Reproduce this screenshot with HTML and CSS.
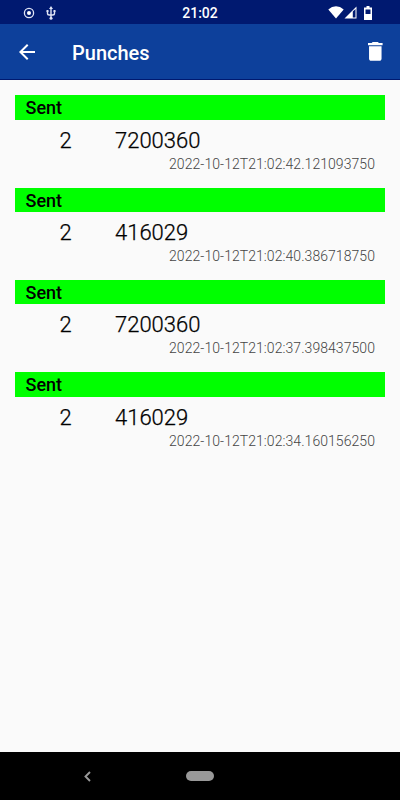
FILE: index.html
```html
<!DOCTYPE html>
<html lang="en">
<head>
    <meta charset="utf-8">
    <title>Punches</title>
    <link rel="stylesheet" href="styles.css">
</head>
<body>
    <div class="status-bar">
        <div class="status-left">
            <svg width="12" height="12" viewBox="0 0 12 12">
                <circle cx="6" cy="6" r="4.6" fill="none" stroke="#dfe4f5" stroke-width="1.3"/>
                <circle cx="6" cy="6" r="2" fill="#fff"/>
            </svg>
            <svg width="10" height="14" viewBox="0 0 10 14" fill="none" stroke="#dfe4f5" stroke-width="1.4">
                <path d="M5 2v10M1.500 5v2.200q0 1.800 1.800 1.800h3.400q1.800 0 1.800-1.800V5"/>
                <path d="M5 0l2 3H3zM.5 4h2v2h-2zM7.500 4h2v2h-2z" fill="#dfe4f5" stroke="none"/>
                <circle cx="5" cy="12.2" r="1.5" fill="#dfe4f5" stroke="none"/>
            </svg>
        </div>
        <span class="clock">21:02</span>
        <div class="status-right">
            <svg width="16" height="13" viewBox="0 0 16 13">
                <path d="M.3 3.400Q3.800.3 8 .3t7.700 3.100L8 12.600z" fill="#fff"/>
            </svg>
            <svg class="signal" width="13" height="13" viewBox="0 0 13 13">
                <path d="M12.500.5v12H.5z" fill="#fff"/>
                <path d="M8.800 5.600L11.500 2.900v8.600H8.800z" fill="#001970"/>
            </svg>
            <svg width="8" height="14" viewBox="0 0 8 14">
                <path d="M2.500 0h3v1.500H8V14H0V1.500h2.500z" fill="#fff"/>
                <path d="M1.500 3.500h5V8h-5z" fill="#001970"/>
            </svg>
        </div>
    </div>

    <header class="toolbar">
        <svg width="16" height="16" viewBox="4 4 16 16">
            <path d="M20 11H7.830l5.590-5.590L12 4l-8 8 8 8 1.410-1.410L7.830 13H20v-2z" fill="#fff"/>
        </svg>
        <h1>Punches</h1>
        <svg width="14.6" height="18.8" viewBox="5 3 14 18">
            <path d="M6 19c0 1.100.9 2 2 2h8c1.100 0 2-.9 2-2V7H6v12zM19 4h-3.500l-1-1h-5l-1 1H5v2h14V4z" fill="#fff"/>
        </svg>
    </header>

    <main class="punches">
        <div class="punch">
            <div class="status">Sent</div>
            <div class="row"><span class="code">2</span><span class="card">7200360</span></div>
            <div class="time">2022-10-12T21:02:42.121093750</div>
        </div>
        <div class="punch">
            <div class="status">Sent</div>
            <div class="row"><span class="code">2</span><span class="card">416029</span></div>
            <div class="time">2022-10-12T21:02:40.386718750</div>
        </div>
        <div class="punch">
            <div class="status">Sent</div>
            <div class="row"><span class="code">2</span><span class="card">7200360</span></div>
            <div class="time">2022-10-12T21:02:37.398437500</div>
        </div>
        <div class="punch">
            <div class="status">Sent</div>
            <div class="row"><span class="code">2</span><span class="card">416029</span></div>
            <div class="time">2022-10-12T21:02:34.160156250</div>
        </div>
    </main>

    <nav class="nav-bar">
        <svg width="7" height="11" viewBox="0 0 7 11">
            <path d="M6 1L1.500 5.500 6 10" fill="none" stroke="#999" stroke-width="1.9"/>
        </svg>
        <div class="home"></div>
    </nav>
</body>
</html>
```
FILE: styles.css
```css
body {
    margin: 0;
    height: 800px;
    display: flex;
    flex-direction: column;
    font-family: Roboto, sans-serif;
    background-color: #fafafa;
    color: #000;
}

svg {
    display: block;
    flex: none;
}

/* System bar */
.status-bar {
    height: 24px;
    box-sizing: border-box;
    padding: 0 28px 0 23px;
    display: grid;
    grid-template-columns: 1fr auto 1fr;
    align-items: center;
    background-color: #001970;
    color: #fff;
}

.status-left {
    display: flex;
    align-items: center;
    gap: 11px;
}

.clock {
    font-size: 14px;
    font-weight: 500;
    line-height: 24px;
    padding-top: 1px;
    margin-left: 5px;
}

.status-right {
    display: flex;
    align-items: center;
    justify-content: flex-end;
}

.signal {
    margin-right: 7px;
}

.toolbar {
    height: 56px;
    box-sizing: border-box;
    padding: 0 17px 0 19px;
    display: flex;
    align-items: center;
    background-color: #0d409b;
    border-bottom: 1px solid #001970;
    color: #fff;
}

.toolbar h1 {
    flex: 1;
    margin: 3px 0 0 37px;
    font-size: 20px;
    font-weight: 500;
}

/* List of punches */
.punches {
    flex: 1;
    padding: 15.3px 15px 0;
}

.punch {
    height: 92.3px;
}

.status {
    height: 24.4px;
    padding-left: 10.5px;
    background-color: #00ff00;
    font-size: 18px;
    font-weight: 500;
    line-height: 26.4px;
}

.row {
    display: flex;
    height: 34px;
    padding-left: 44.4px;
    font-size: 22px;
    font-weight: 300;
    line-height: 42.4px;
    -webkit-text-stroke: 0.25px #000;
}

.code {
    width: 55.6px;
}

.time {
    padding-right: 10px;
    font-size: 14px;
    font-weight: 300;
    letter-spacing: 0.06px;
    line-height: 21.4px;
    text-align: right;
    color: #444;
}

.nav-bar {
    height: 48px;
    box-sizing: border-box;
    padding-left: 84px;
    display: flex;
    align-items: center;
    background-color: #000;
}

.home {
    width: 28px;
    height: 10px;
    margin-left: 95px;
    border-radius: 5px;
    background-color: #999;
}
```
